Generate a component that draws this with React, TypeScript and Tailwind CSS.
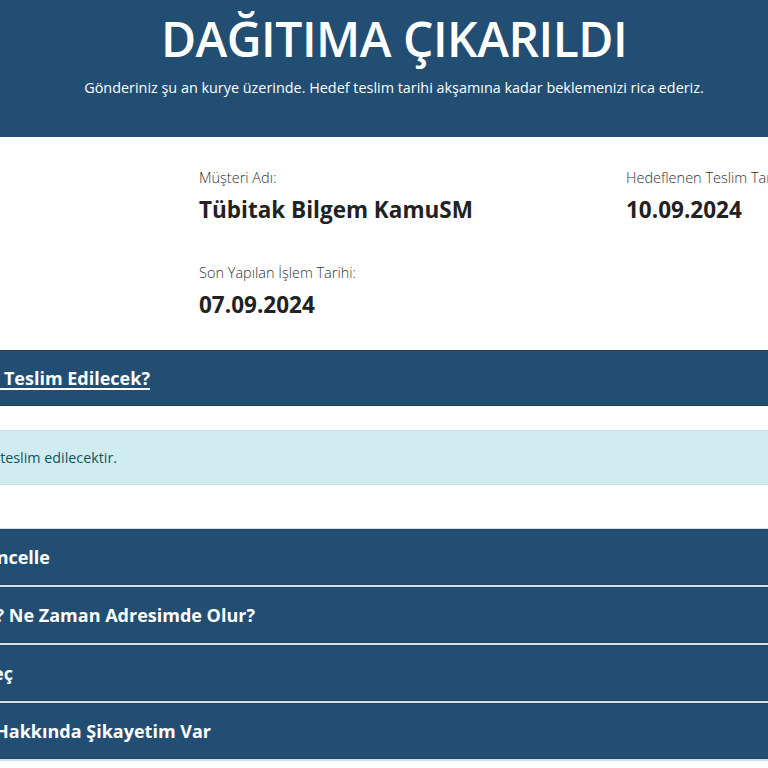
import React from "react";

const font = { fontFamily: '"Open Sans", "Noto Sans", sans-serif' };

type BarProps = { text: string; end: number; underline?: boolean };

// text is cut at the left edge of the window, so we align its end to a fixed x
function Bar({ text, end, underline }: BarProps) {
  return (
    <div className="flex items-center h-[56px] bg-[#224e74] border-y border-[#2b4256]">
      <div className="flex justify-end shrink-0" style={{ width: end }}>
        <span
          className={`shrink-0 whitespace-nowrap text-[18px] font-bold text-white ${
            underline ? "underline underline-offset-[3px] decoration-[1.5px]" : ""
          }`}
        >
          {text}
        </span>
      </div>
    </div>
  );
}

function InfoItem({ label, value }: { label: string; value: string }) {
  return (
    <div className="flex flex-col whitespace-nowrap">
      <span className="text-[14.5px] font-light text-[#333] leading-[18px]">{label}</span>
      <span className="mt-[8px] text-[22.5px] font-bold text-[#222] leading-[30px]">{value}</span>
    </div>
  );
}

export default function App() {
  return (
    <div className="w-[768px] h-[768px] overflow-hidden bg-white" style={font}>
      <div className="flex flex-col items-center h-[137px] bg-[#224e74] pl-5 text-white">
        <h1 className="mt-[9px] text-[48px] font-semibold leading-[60px] tracking-[-0.5px]">
          DAĞITIMA ÇIKARILDI
        </h1>
        <p className="mt-[9px] text-[14.4px] leading-[20px]">
          Gönderiniz şu an kurye üzerinde. Hedef teslim tarihi akşamına kadar beklemenizi rica ederiz.
        </p>
      </div>

      <div className="h-[213px] pt-[32px] pl-[199px] flex flex-col gap-[39px]">
        <div className="flex">
          <div className="w-[427px] shrink-0">
            <InfoItem label="Müşteri Adı:" value="Tübitak Bilgem KamuSM" />
          </div>
          <InfoItem label="Hedeflenen Teslim Tarihi:" value="10.09.2024" />
        </div>
        <InfoItem label="Son Yapılan İşlem Tarihi:" value="07.09.2024" />
      </div>

      <Bar text="Ne Zaman Teslim Edilecek?" end={150} underline />

      <div className="h-[24px]" />
      <div className="flex items-center h-[55px] bg-[#d1ecf1] border-y border-[#c3e3ea]">
        <div className="flex justify-end shrink-0 w-[117px]">
          <span className="shrink-0 whitespace-nowrap text-[14.3px] text-[#0c5460]">
            Gönderiniz hedef tarihte teslim edilecektir.
          </span>
        </div>
      </div>
      <div className="h-[43px]" />

      <div className="flex flex-col gap-[2px] bg-[#cfe1ef] pt-[1px] pb-[2px]">
        <Bar text="Teslimat Adresini Güncelle" end={50} />
        <Bar text="Kargom Nerede? Ne Zaman Adresimde Olur?" end={255} />
        <Bar text="Teslimat Tarihi Seç" end={13} />
        <Bar text="Kurye Hakkında Şikayetim Var" end={211} />
      </div>
    </div>
  );
}
